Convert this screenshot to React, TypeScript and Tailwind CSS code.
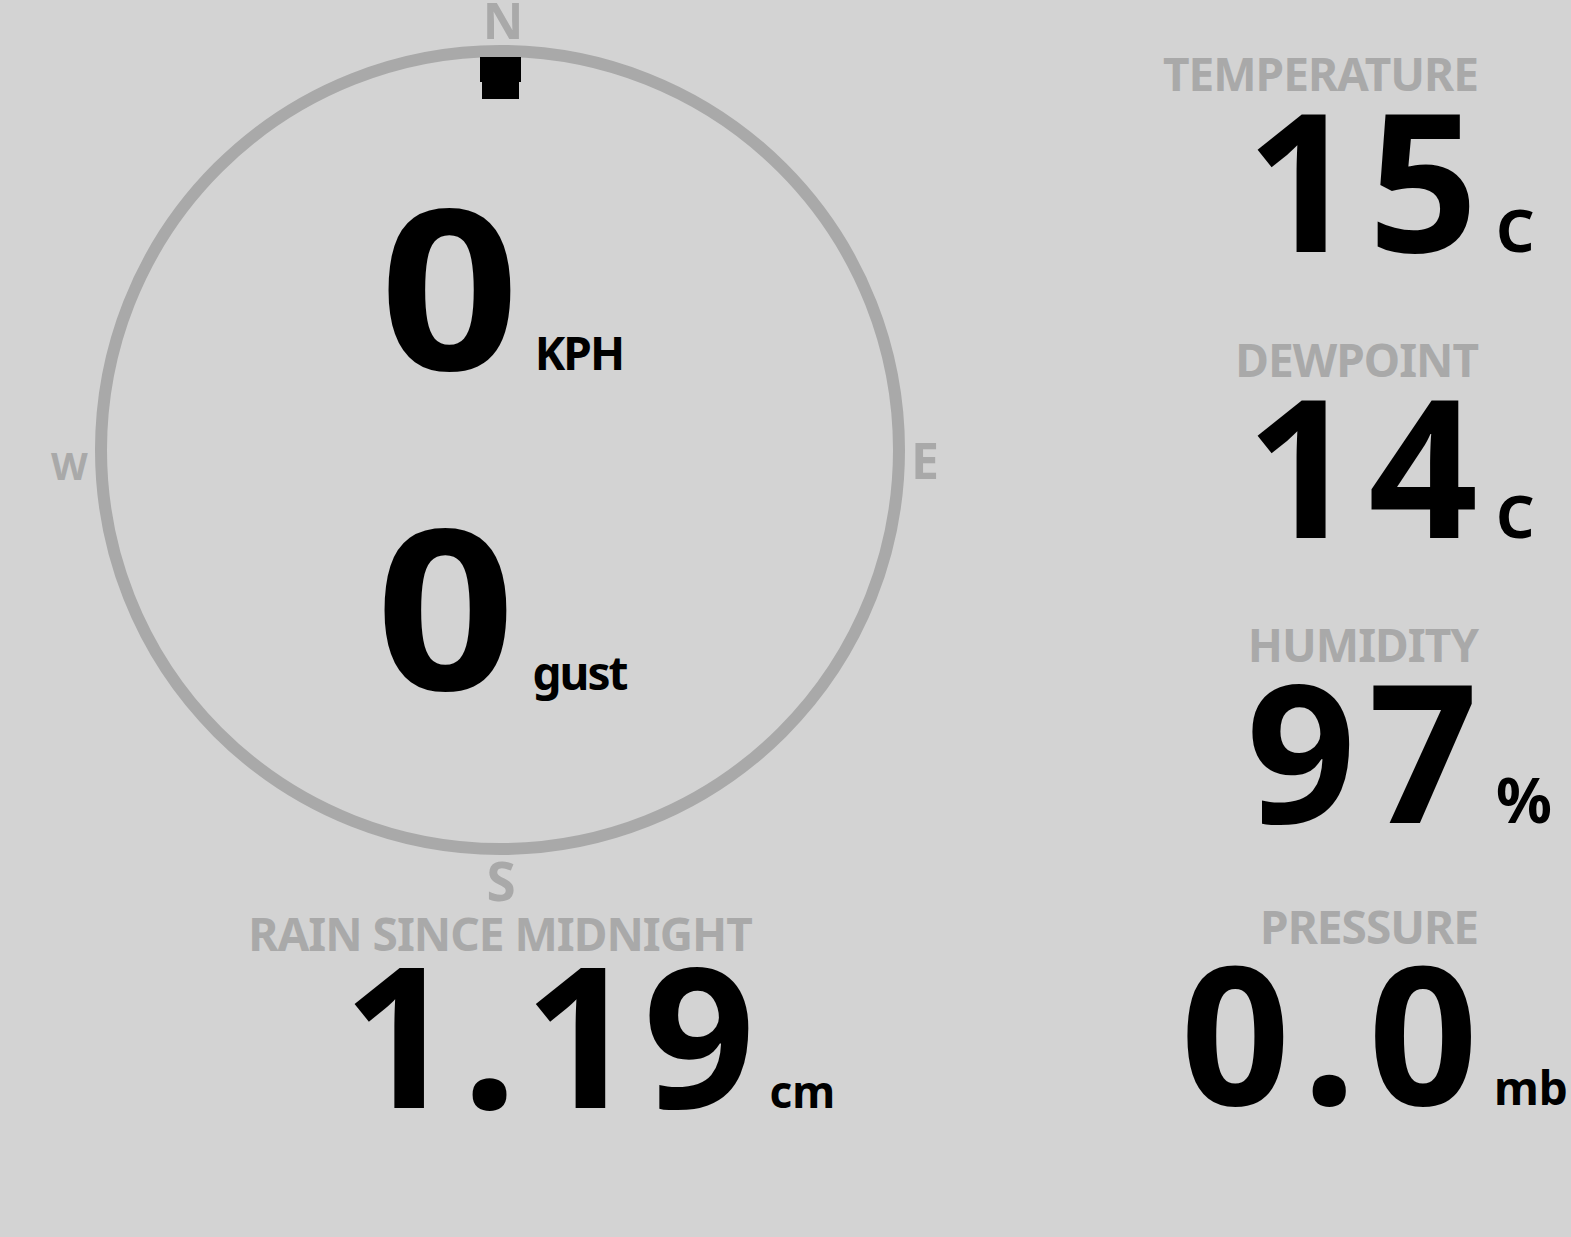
import React from "react";

type Stat = {
  label: string;
  value: string;
  unit: string;
  unitClass: string;
  gapClass: string;
};

const stats: Stat[] = [
  { label: "TEMPERATURE", value: "15", unit: "C", unitClass: "pl-[18px] text-[60px]", gapClass: "mt-0" },
  { label: "DEWPOINT", value: "14", unit: "C", unitClass: "pl-[18px] text-[60px]", gapClass: "mt-[77px]" },
  { label: "HUMIDITY", value: "97", unit: "%", unitClass: "pl-[18px] text-[62px]", gapClass: "mt-[76px]" },
  { label: "PRESSURE", value: "0.0", unit: "mb", unitClass: "pl-[16px] text-[46px]", gapClass: "mt-[73px]" },
];

const Compass = (): JSX.Element => {
  return (
    <div className="relative w-[810px] h-[810px]">
      {/* ring + direction needle */}
      <svg className="absolute inset-0" width="810" height="810" viewBox="0 0 810 810">
        <circle cx="405" cy="405" r="399" fill="none" stroke="#a9a9a9" strokeWidth="12" />
        <path d="M385 12 H426 V37 H424 V54 H387 V37 H385 Z" fill="#000" />
      </svg>

      <span className="absolute top-[-45px] left-[408px] -translate-x-1/2 text-[50px] leading-[40px] text-[#a9a9a9]">N</span>
      <span className="absolute top-[390px] left-[816px] text-[50px] leading-none text-[#a9a9a9]">E</span>
      <span className="absolute top-[809px] left-[406px] -translate-x-1/2 text-[53px] leading-none text-[#a9a9a9]">S</span>
      <span className="absolute top-[401px] left-[-44px] text-[38px] leading-none text-[#a9a9a9]">W</span>

      <div className="relative flex flex-col items-center pt-[79px] pl-[9px]">
        <div className="flex items-baseline">
          <span className="text-[222px] leading-[320px] scale-x-[1.1] text-black">0</span>
          <span className="ml-[22px] text-[46px] leading-none tracking-[-2px] text-black">KPH</span>
        </div>
        <div className="flex items-baseline">
          <span className="text-[222px] leading-[320px] scale-x-[1.1] text-black">0</span>
          <span className="ml-[23px] text-[46px] leading-none tracking-[-2px] text-black">gust</span>
        </div>
      </div>
    </div>
  );
};

export default function App(): JSX.Element {
  return (
    <div className="flex w-full min-h-screen bg-[#d3d3d3] font-['Noto_Sans','DejaVu_Sans',sans-serif] font-bold">
      {/* left: wind + rain */}
      <div className="flex flex-col w-[1000px] shrink-0 pl-[95px] pt-[45px]">
        <Compass />
        <div className="flex flex-col w-[810px] mt-[55px]">
          <div className="text-center text-[46px] leading-none tracking-[-1px] text-[#a9a9a9]">RAIN SINCE MIDNIGHT</div>
          <div className="flex items-baseline pl-[248px]">
            <span className="text-[196px] leading-[152px] tracking-[7px] text-black">1.19</span>
            <span className="ml-[7px] text-[44px] leading-none text-black">cm</span>
          </div>
        </div>
      </div>

      {/* right: readings */}
      <div className="flex flex-col flex-1 pt-[50px]">
        {stats.map((s) => (
          <div key={s.label} className={`grid grid-cols-[1fr_93px] items-baseline ${s.gapClass}`}>
            <div className="text-right text-[46px] leading-none tracking-[-1px] text-[#a9a9a9]">{s.label}</div>
            <div />
            <div className="text-right text-[192px] leading-[163px] tracking-[12px] mr-[-12px] text-black">{s.value}</div>
            <div className={`leading-[50px] text-black ${s.unitClass}`}>{s.unit}</div>
          </div>
        ))}
      </div>
    </div>
  );
}
